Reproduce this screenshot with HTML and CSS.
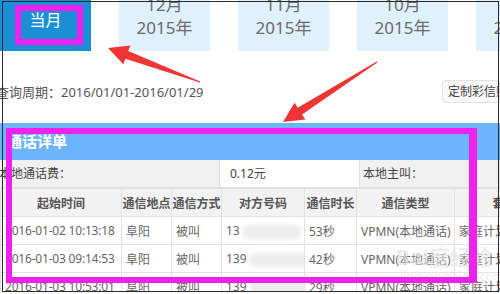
FILE: index.html
```html
<!DOCTYPE html>
<html lang="zh">
<head>
<meta charset="utf-8">
<link rel="stylesheet" href="styles.css">
</head>
<body>
<div class="page">
  <div class="content">
    <div class="tabs">
      <div class="tab active"><div class="tab-in">当月</div></div>
      <div class="tab"><div class="tab-in">12月<br>2015年</div></div>
      <div class="tab"><div class="tab-in">11月<br>2015年</div></div>
      <div class="tab"><div class="tab-in">10月<br>2015年</div></div>
      <div class="tab"><div class="tab-in">9月<br>2015年</div></div>
    </div>
    <div class="query">
      <span class="period">查询周期：2016/01/01-2016/01/29</span>
      <span class="btn">定制彩信账单</span>
    </div>
    <div class="section-title">通话详单</div>
    <div class="summary">
      <div class="s-label">本地通话费：</div>
      <div class="s-value">0.12元</div>
      <div class="s-label">本地主叫：</div>
    </div>
    <table class="detail">
      <colgroup>
        <col class="c1"><col class="c2"><col class="c3"><col class="c4"><col class="c5"><col class="c6"><col class="c7">
      </colgroup>
      <thead>
        <tr><th>起始时间</th><th>通信地点</th><th>通信方式</th><th>对方号码</th><th>通信时长</th><th>通信类型</th><th>套餐</th></tr>
      </thead>
      <tbody>
        <tr><td>2016-01-02 10:13:18</td><td>阜阳</td><td>被叫</td><td>13<span class="blob"></span></td><td>53秒</td><td>VPMN(本地通话)</td><td>家庭计划</td></tr>
        <tr><td>2016-01-03 09:14:53</td><td>阜阳</td><td>被叫</td><td>139<span class="blob"></span></td><td>42秒</td><td>VPMN(本地通话)</td><td>家庭计划</td></tr>
        <tr><td>2016-01-03 10:53:01</td><td>阜阳</td><td>被叫</td><td>139<span class="blob"></span></td><td>29秒</td><td>VPMN(本地通话)</td><td>家庭计划</td></tr>
      </tbody>
    </table>
  </div>

  <div class="watermark">
    <div class="wm-big">Bai度经验</div>
    <div class="wm-small">jingyan.baidu.com</div>
  </div>

  <div class="hl hl-tab"></div>
  <div class="hl hl-table"></div>

  <svg class="arrows" width="500" height="294" viewBox="0 0 500 294">
    <polygon fill="#f03535" points="108,48 130.3,45.5 128.2,51.1 200.2,81.5 199.8,82.5 125.4,58.7 123.3,64.3"/>
    <polygon fill="#f03535" points="283,122 305.3,119.6 302.1,114.6 377.3,62.4 376.7,61.6 297.7,107.8 294.5,102.8"/>
  </svg>

  <div class="frame"></div>
</div>
</body>
</html>
```

FILE: styles.css
```css
* { box-sizing: border-box; }
html, body { margin: 0; padding: 0; background: #fff; }
body {
  font-family: "Noto Sans", "Noto Sans CJK SC", sans-serif;
  width: 500px;
  height: 294px;
  overflow: hidden;
}
.page {
  position: relative;
  width: 500px;
  height: 294px;
  overflow: hidden;
  background: #fff;
}
.content {
  width: 500px;
  height: 291px;
  overflow: hidden;
}
.tabs {
  display: flex;
  gap: 28px;
  height: 51px;
  width: 600px;
}
.tab {
  flex: 0 0 91px;
  height: 51px;
  background: #dff1fd;
  color: #6a6a6a;
  text-align: center;
  font-size: 17px;
  line-height: 23px;
  overflow: hidden;
}
.tab-in { margin-top: -7px; }
.tab.active {
  background: #1a8fd8;
  color: #fff;
  font-size: 16px;
  line-height: 22px;
}
.tab.active .tab-in { margin-top: 9px; }

.query {
  display: flex;
  justify-content: space-between;
  align-items: center;
  height: 23px;
  margin-top: 29px;
}
.period {
  margin-left: -4px;
  font-size: 13px;
  color: #555;
}
.btn {
  height: 23px;
  line-height: 21px;
  padding: 0 5px;
  font-size: 12px;
  color: #444;
  border: 1px solid #e2e2e2;
  border-radius: 4px;
  background: #f9f9f9;
  width: 58px;
  white-space: nowrap;
  overflow: hidden;
}

.section-title {
  margin-top: 20px;
  height: 37px;
  line-height: 37px;
  background: #6cb4fb;
  color: #fff;
  font-size: 15px;
  font-weight: bold;
  padding-left: 7px;
}

.summary {
  display: grid;
  grid-template-columns: 220px 140px 1fr;
  height: 28px;
  font-size: 12px;
  color: #444;
}
.s-label, .s-value {
  line-height: 27px;
  border-bottom: 1px solid #e0e0e0;
  border-right: 1px solid #e0e0e0;
  white-space: nowrap;
}
.s-label { background: #f0f0f0; padding-left: 0; margin-left: -1px; }
.s-label:nth-child(3) { margin-left: 0; padding-left: 3px; }
.s-value { background: #fff; padding-left: 10px; }

.detail {
  border-collapse: collapse;
  table-layout: fixed;
  width: 554px;
  font-size: 12px;
  color: #666;
}
.c1 { width: 121px; }
.c2 { width: 50px; }
.c3 { width: 50px; }
.c4 { width: 83px; }
.c5 { width: 52px; }
.c6 { width: 98px; }
.c7 { width: 100px; }
.detail th, .detail td {
  height: 28px;
  border: 1px solid #e2e2e2;
  padding: 0 4px;
  white-space: nowrap;
  overflow: hidden;
}
.detail th {
  background: #f2f2f2;
  color: #555;
  font-weight: 600;
  text-align: center;
  padding: 0;
}
.detail td { text-align: left; background: #fff; }
.detail td:first-child { padding-left: 4px; letter-spacing: -0.2px; }
.blob {
  display: inline-block;
  width: 60px;
  height: 14px;
  margin-left: 2px;
  vertical-align: middle;
  background: #ececec;
  border-radius: 7px;
  filter: blur(2px);
}

.watermark {
  position: absolute;
  left: 396px;
  top: 244px;
  color: rgba(190, 190, 190, 0.3);
  text-shadow: 0 0 1px rgba(255,255,255,0.6);
}
.wm-big { font-size: 21px; font-weight: bold; line-height: 26px; }
.wm-small { font-size: 12px; line-height: 14px; margin-left: 4px; }

.hl {
  position: absolute;
  border: 6px solid #f020ee;
}
.hl-tab { left: 15px; top: 5px; width: 68px; height: 40px; }
.hl-table { left: 6px; top: 128px; width: 471px; height: 155px; border-right-width: 8px; }

.arrows { position: absolute; left: 0; top: 0; }

.frame {
  position: absolute;
  left: 2px;
  top: 1px;
  width: 497px;
  height: 291px;
  border: 1px solid #2a2a2a;
}
```
